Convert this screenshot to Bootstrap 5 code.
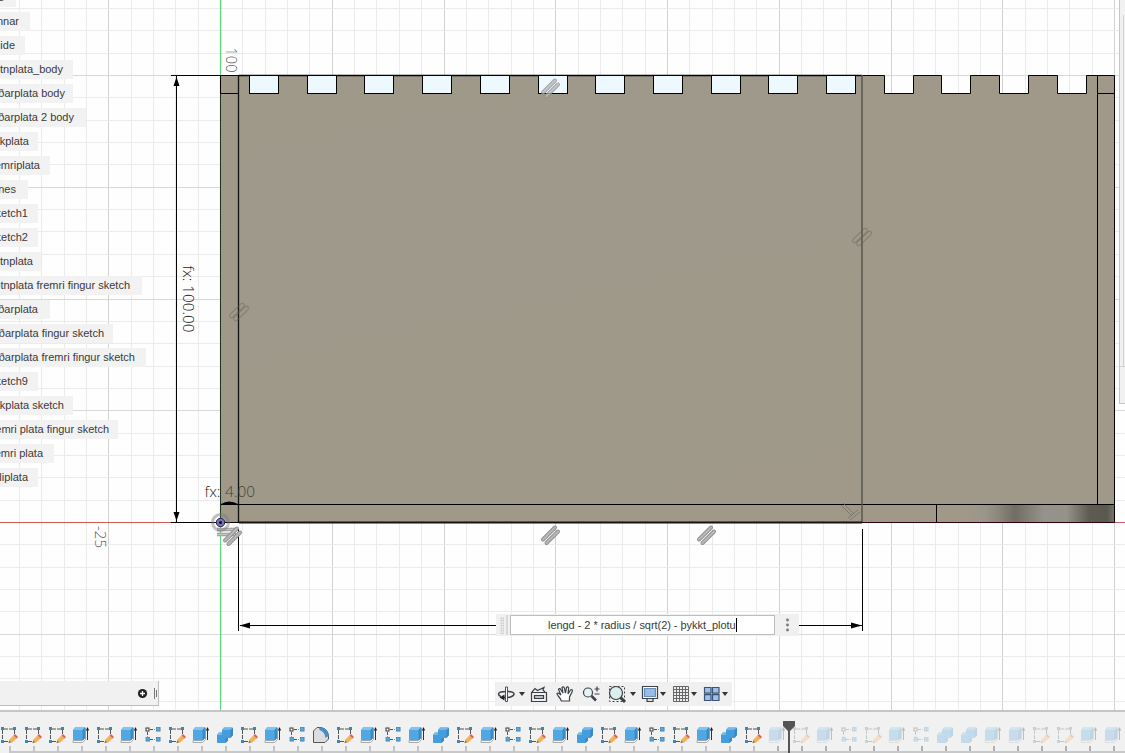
<!DOCTYPE html>
<html lang="is">
<head>
<meta charset="utf-8">
<meta name="viewport" content="width=device-width, initial-scale=1">
<title>Sketch</title>
<link href="https://cdn.jsdelivr.net/npm/bootstrap@5.3.0/dist/css/bootstrap.min.css" rel="stylesheet">
<style>
body{font:11px/19px "Liberation Sans",Arial,sans-serif;color:#3a3a3a;background:#fefefe;height:753px}
.workspace{height:710px}
.scene{inset:0;z-index:0}
.scene text{font-family:"Open Sans","Noto Sans",sans-serif;font-size:15px;font-weight:300}
.browser{margin-top:-12px;gap:5px;z-index:1}
.browser li{height:19px;background:#f2f2f2;white-space:nowrap}
.dim-entry{left:496px;top:614px;width:303px;height:22px;background:#f0f0f0;z-index:2}
.grip{width:4px;height:17px;margin-left:4px;background:radial-gradient(circle,#c3c3c3 .7px,transparent 1px) 0 0/2.5px 2.5px}
.grip-edge{width:2px;height:20px;background:#d8d8d8;margin:0 2px}
.entry{width:265px;height:20px;border:1px solid #bdbdbd;background:#fff;line-height:18px;padding-left:37px;white-space:nowrap;letter-spacing:-.045px}
.caret{width:1px;height:14px;background:#000}
.comments{width:159px;height:25px;background:#f1f1f1;border:solid #bdbdbd;border-width:0 1px 1px 0}
.navtools{width:237px;height:24px;margin-left:336px;background:#f0f0f0}
.side{left:1119px;top:0;width:6px;height:404px;background:#f1f1f1;border:solid #c6c6c6;border-width:0 0 1px 1px;z-index:2}
.timeline{height:43px;background:#f1f1f1;border-top:2px solid #c6c6c6;z-index:1}
.step{flex:0 0 24px;height:41px;padding-top:14px}
.step svg{width:18px;height:18px;display:block}
.off svg{opacity:.27}
.step::after{content:"";display:block;width:2px;height:5px;background:#c2c2c2;margin:2px 0 0 9px}
.off::after{background:#b0b0b0}
.rail{left:9px;right:0;bottom:0;height:2px;background:#c8c8c8}
.marker{left:782px;top:9px}
</style>
</head>
<body class="overflow-hidden position-relative">
<main class="workspace position-relative d-flex flex-column justify-content-between">
<svg class="scene position-absolute" width="1125" height="711" viewBox="0 0 1125 711">
<defs>
<linearGradient id="sheen"><stop offset="0" stop-color="#a09989"/><stop offset=".16" stop-color="#a09989"/><stop offset=".27" stop-color="#9a968a"/><stop offset=".34" stop-color="#8d897d"/><stop offset=".44" stop-color="#716d63"/><stop offset=".6" stop-color="#94928a"/><stop offset=".73" stop-color="#95938a"/><stop offset=".86" stop-color="#5f5c53"/><stop offset=".96" stop-color="#5b584f"/><stop offset="1" stop-color="#77736a"/></linearGradient>
<linearGradient id="face" x1=".3" y1="0" x2=".6" y2="1"><stop offset="0" stop-color="#9f998a"/><stop offset=".5" stop-color="#9e998a"/><stop offset="1" stop-color="#a09989"/></linearGradient>
<g id="par" stroke-linecap="round"><path d="M-7 4.500L5 -7.500M-3.500 8L8 -3.500" stroke="#929292" stroke-width="4"/><path d="M-7 4.500L5 -7.500M-3.500 8L8 -3.500" stroke="#b9b9b9" stroke-width="2"/></g>
<g id="parfaint" fill="none" stroke="#66645a" stroke-opacity=".5"><rect x="-10" y="-4.500" width="19" height="4" rx="2" transform="rotate(-44)"/><rect x="-9" y=".5" width="19" height="4" rx="2" transform="rotate(-44)"/></g>
</defs>
<g id="grid"></g>
<path d="M0 522.500H220" stroke="#cf5b55"/><path d="M1114 522.500H1125" stroke="#cf5b70"/>
<path d="M220.500 0V711" stroke="#5fd77b" stroke-width="1.200"/>
<path d="M220.500 75.500H884.500V93.500H913.500V75.500H941.500V93.500H970.500V75.500H999.500V93.500H1028.500V75.500H1057.500V93.500H1086.500V75.500H1114.500V522.500H220.500Z" fill="#a09989" stroke="#000"/>
<rect x="239" y="76" width="623" height="428" fill="url(#face)"/>
<rect x="937" y="505" width="177" height="17" fill="url(#sheen)"/>
<path d="M220.500 93.500H238.500M220.500 504.500H1114M1097.500 76V504M1097.500 93.500H1114M936.500 504V522" stroke="#000" fill="none"/>
<path d="M238.500 75V523" stroke="#111" stroke-width="1.300"/>
<path d="M238.500 75.500H862" stroke="#000" stroke-width="1.400"/>
<g id="slots" fill="#eef9ff" stroke="#000"></g>
<path d="M862 75V523" stroke="#55534a" stroke-opacity=".85" stroke-width="1.700"/>
<path d="M239 522.500H862" stroke="#14130f" stroke-width="2"/><path d="M862 522.500H1114" stroke="#32000c"/>
<path d="M220.500 94V522" stroke="#20351f"/>
<path d="M171 75.500H221M176.500 76V522M171 522.500H239M238.500 528V631M862.500 529V631M240 625.500H496M799 625.500H862" stroke="#000" fill="none"/>
<path d="M176.500 77L179.500 86H173.500ZM176.500 521L173.500 512H179.500ZM239.500 625.500L250 622.500V628.500ZM862 625.500L851 622.500V628.500ZM221 504Q229 499 238 504Z"/>
<g fill="#222">
<text transform="translate(182.500 265.500) rotate(90)" textLength="67" lengthAdjust="spacingAndGlyphs">fx: 100.00</text>
<text x="204.500" y="497" textLength="16" lengthAdjust="spacingAndGlyphs">fx:</text>
<text x="225" y="497" textLength="30" lengthAdjust="spacingAndGlyphs" fill="#45423b">4.00</text></g>
<g fill="#555"><text transform="translate(225.500 47.500) rotate(90)" textLength="25" lengthAdjust="spacingAndGlyphs">100</text>
<text transform="translate(95 526) rotate(90)" textLength="22" lengthAdjust="spacingAndGlyphs">-25</text></g>
<use href="#par" x="550" y="88" opacity=".8"/><use href="#par" x="550" y="535"/><use href="#par" x="706" y="535"/>
<path d="M217 529.500H236M217 534.500H236" stroke="#999" stroke-width="3.500"/><path d="M217 529.500H236M217 534.500H236" stroke="#c5c5c5" stroke-width="1.500"/>
<use href="#par" x="232" y="536"/>
<use href="#parfaint" x="862" y="237"/><use href="#parfaint" x="239" y="312"/>
<path d="M843 503L854 514M841 505L852 516M848 518L858 510M850 520L860 512" stroke="#716e62" stroke-opacity=".75" fill="none"/>
<circle cx="220.500" cy="522.500" r="8" fill="none" stroke="#777" stroke-opacity=".45" stroke-width="3"/>
<circle cx="220.500" cy="522.500" r="4.200" fill="#7770ae" stroke="#2c2751"/><circle cx="220.500" cy="522.500" r="1.500" fill="#111"/>
</svg>

<ul class="browser list-unstyled d-flex flex-column align-items-start position-relative mb-0" id="browser"></ul>

<div class="dim-entry position-absolute d-flex align-items-center">
<span class="grip"></span><span class="grip-edge"></span>
<div class="entry d-flex align-items-center"><span>lengd - 2 * radius / sqrt(2) - þykkt_plotu</span><span class="caret"></span></div>
<svg width="24" height="22"><g fill="#777"><circle cx="12.500" cy="6" r="1.400"/><circle cx="12.500" cy="11" r="1.400"/><circle cx="12.500" cy="16" r="1.400"/></g></svg>
</div>
<aside class="side position-absolute"><svg width="5" height="403" class="d-block"><path d="M3.500 15V366M0 366.500H5" stroke="#d2d2d2" fill="none"/></svg></aside>

<div class="d-flex align-items-end position-relative pb-1">
<div class="comments"><svg width="158" height="24" class="d-block"><circle cx="142.500" cy="12.500" r="4.600" fill="#222"/><path d="M140 12.500H145M142.500 10V15" stroke="#fff" stroke-width="1.300"/><path d="M154.500 7V18M156.500 9V16" stroke="#777"/></svg></div>
<div class="navtools"><svg width="237" height="24" viewBox="0 0 237 24" class="d-block" fill="none" stroke="#3c4148" stroke-width="1.200">
<path d="M8 15.500C15 16 19 14 19 12C19 8.500 3.500 8.500 3.500 12C3.500 13 4.500 14 6 14.500" stroke-width="1.500"/><path d="M10.500 5H12.500V19.500H10.500Z" fill="#fff" stroke-width=".9"/><path d="M4.500 15.500L9.500 12.500V18.500Z" fill="#222" stroke="none"/>
<path d="M36.500 10.500H51.500V19.500H36.500ZM37 10L40 6.500L42.500 8.500L49 5.500L48 8L50 10"/><path d="M39.500 13.500H48.500V16.500H39.500Z" fill="#b9bec8"/>
<path d="M66.500 19C65 15 61.500 13 62 11.500C63 10.500 65 12 66 13L63.500 7.500C64 6 65.500 6.500 66 8L68 11L67 5.500C68 4 69.500 5 69.500 7L70.500 11L71.500 5.500C72.500 4 74 5 73.500 7L73 12L75.500 8C77 7 78 8 77 10L74.500 15V19Z" fill="#fff"/>
<circle cx="93" cy="10.500" r="4.500" fill="#e5f3f3"/><path d="M96.500 14L101 18.500" stroke-width="2.500"/><path d="M99.500 7H104.500M102 4.500V9.500M99.500 12H104.500"/>
<path d="M114.500 4.500H129.500V19.500H114.500Z" stroke-dasharray="2 2" stroke-width="1"/><circle cx="121" cy="11" r="6.500" fill="#dceeee"/><path d="M125.500 15.500L130 20" stroke-width="3"/>
<path d="M147.500 4.500H162.500V16.500H147.500Z" fill="#fff"/><path d="M149.500 6.500H160.500V14.500H149.500Z" fill="#9bbce6" stroke="#668ebd"/><path d="M152 17V19.500H158V17" fill="#ddd"/>
<path d="M178.500 4.500H193.500V19.500H178.500ZM181.500 5V19M184.500 5V19M187.500 5V19M190.500 5V19M179 7.500H193M179 10.500H193M179 13.500H193M179 16.500H193" stroke="#666" stroke-width="1"/>
<path d="M209.500 5.500H216V11.200H209.500ZM217.500 5.500H224V11.200H217.500ZM209.500 12.700H216V18.500H209.500ZM217.500 12.700H224V18.500H217.500Z" fill="#9ebfe9" stroke="#3d5372"/>
<path d="M24 10H30L27 14ZM135 10H141L138 14ZM165 10H171L168 14ZM196 10H202L199 14ZM227 10H233L230 14Z" fill="#333" stroke="none"/>
</svg></div>
</div>
</main>

<footer class="timeline position-relative d-flex" id="timeline">
<span class="rail position-absolute"></span>
<svg class="marker position-absolute" width="14" height="34"><path d="M1 0H13V5L8 10V34H6V10L1 5Z" fill="#555"/></svg>
</footer>

<script>
// Sketch grid: 5-unit minor lines, 25-unit major lines, measured from the origin
const step = 22.35;
let g = '';
for (let i = -9; i < 41; i++) {
  const x = Math.round(220 + i * step) + .5;
  g += `<path d="M${x} 0V711" stroke="${i % 5 ? '#ebebeb' : '#d2d2d2'}"/>`;
}
for (let i = -8; i < 24; i++) {
  const y = Math.round(522 - i * step) + .5;
  g += `<path d="M0 ${y}H1125" stroke="${i % 5 ? '#ebebeb' : '#d8d8d8'}"/>`;
}
document.getElementById('grid').innerHTML = g;

document.getElementById('slots').innerHTML =
  [249.5,307.5,364.5,422.5,480.5,538.5,595.5,653.5,711.5,768.5,826.5]
  .map(x => `<rect x="${x}" y="75.5" width="29" height="18"/>`).join('');

// [label, row width, right padding]
const rows = [['s',16,12],['nnar',30,11],['uide',25,10],['otnplata_body',73,10],['ðarplata body',73,8],
 ['ðarplata 2 body',86,12],['akplata',38,9],['emriplata',50,10],['nes',28,12],['ketch1',38,10],['ketch2',38,10],
 ['otnplata',41,8],['otnplata fremri fingur sketch',142,12],['ðarplata',50,12],['ðarplata fingur sketch',113,9],
 ['ðarplata fremri fingur sketch',146,11],['ketch9',38,10],['akplata sketch',73,9],['emri plata fingur sketch',118,9],
 ['emri plata',54,11],['lliplata',38,10]];
document.getElementById('browser').innerHTML = rows.map(r =>
  `<li class="d-flex justify-content-end overflow-hidden" style="width:${r[1]}px;padding-right:${r[2]}px">${r[0]}</li>`).join('');

const dot = (x, y, c) => `<rect x="${x}" y="${y}" width="3" height="3" fill="${c}"/>`;
const icons = {
  S: `<path d="M4 3H13M2.500 4V14M14.500 4V9M4 15.500H8" stroke="#555" stroke-dasharray="4 1" fill="none"/>`
     + dot(1,1,'#4381bd') + dot(13,1,'#4381bd') + dot(1,14,'#4381bd')
     + `<path d="M8.500 17L9.500 13.500L13.500 9.500L16.500 12.500L12.500 16.200Z" fill="#f5b24e"/><path d="M13.500 9.500L15 8L18 11L16.500 12.500Z" fill="#e0604a"/><path d="M8.500 17L9.300 14.500L11 16.200Z" fill="#666"/>`,
  E: `<path d="M1 14.500V16.500H10.500L13.500 13.500V11.500L10.500 14.500Z" fill="#f4f4f4" stroke="#aaa"/><path d="M1 4L3.500 1H12.500Q13.500 1 13.500 2V11.500L10.500 14.200H2Q1 14.200 1 13Z" fill="#52a7e3"/><path d="M1 4L3.500 1H13L10.500 4Z" fill="#82c4ef"/><path d="M10.500 4L13.500 1.500V11.500L10.500 14.200Z" fill="#3b8bc4"/><path d="M15.500 3V14" stroke="#333"/><path d="M13.800 4.500L15.500 1L17.200 4.500Z" fill="#222"/>`,
  P: `<path d="M6 3.500H11M3.500 6V11M6 13.500H11" stroke="#555" stroke-dasharray="3 1.500"/><rect x="2" y="2" width="3" height="3" fill="#fff" stroke="#333"/><g fill="#5ba8dc" stroke="#357fae" stroke-width=".7"><rect x="12.500" y="1.500" width="3.600" height="3.600"/><rect x="12.500" y="11.500" width="3.600" height="3.600"/><rect x="2" y="11.500" width="3.600" height="3.600"/></g>`,
  C: `<path d="M6 4L8 1.500H16Q17 1.500 17 2.500V9L14.500 12H12V14.500L9.500 17H2Q1 17 1 16V9L3 6.500H6Z" fill="#469ddc"/><path d="M6 4L8 1.500H16.500L14.500 4ZM1 9L3 6.500H6V9Z" fill="#70bbed"/><path d="M14.500 4L17 2V9L14.500 12ZM12 12V14.500L9.500 17V12Z" fill="#3a88c2"/>`,
  F: `<path d="M1.500 5L5 1.500H9Q16.500 3 16.500 11V13L13 16.500H1.500Z" fill="#ddd" stroke="#555"/><path d="M7 1.500H9Q16 3 16.500 10L13.500 12Q13 6 7.500 4Z" fill="#3c91d2"/>`
};
const add = (seq, off) => [...seq].map(k => `<div class="step ${off}"><svg viewBox="0 0 18 18">${icons[k]}</svg></div>`).join('');
document.getElementById('timeline').insertAdjacentHTML('afterbegin',
  add('SSSESEPSECSEPFSEPECSEPSECSEPSECS', '') + add('ESEPSEPCCEESSEE', 'off'));
</script>
<script src="https://cdn.jsdelivr.net/npm/bootstrap@5.3.0/dist/js/bootstrap.bundle.min.js"></script>
</body>
</html>
